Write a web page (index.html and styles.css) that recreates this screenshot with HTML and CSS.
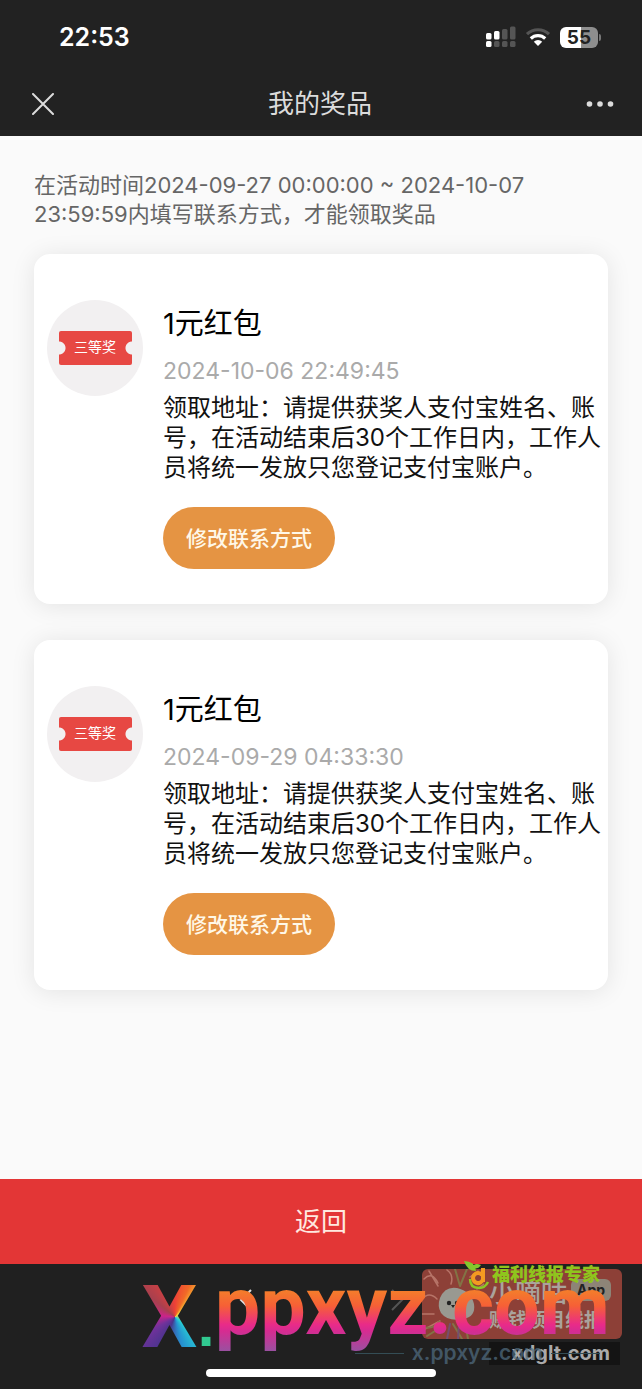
FILE: index.html
```html
<!DOCTYPE html>
<html lang="zh-CN">
<head>
<meta charset="utf-8">
<meta name="viewport" content="width=device-width, initial-scale=1">
<title>我的奖品</title>
<link rel="stylesheet" href="styles.css">
</head>
<body>
<div class="app">
  <header class="top">
    <div class="status">
      <span class="clock">22:53</span>
      <div class="indicators">
        <svg class="signal" width="30" height="22" viewBox="0 0 30 22" aria-hidden="true">
          <g fill="#fff"><rect x="0" y="7" width="5.500" height="6.500" rx="1.500"/><rect x="8" y="5" width="5.500" height="8.500" rx="1.500"/><rect x="0" y="15" width="5.500" height="6" rx="1.500"/></g>
          <g fill="#555"><rect x="16" y="3" width="5.500" height="10.500" rx="1.500"/><rect x="24" y="0.500" width="5.500" height="13" rx="1.500"/><rect x="8" y="15" width="5.500" height="6" rx="1.500"/><rect x="16" y="15" width="5.500" height="6" rx="1.500"/><rect x="24" y="15" width="5.500" height="6" rx="1.500"/></g>
        </svg>
        <svg class="wifi" width="26" height="20" viewBox="0 0 26 20" aria-hidden="true">
          <g fill="none" stroke-width="3.200"><path stroke="#555" d="M2 7.200a15.800 15.800 0 0 1 22 0"/><path stroke="#fff" d="M5.800 11.500a10.400 10.400 0 0 1 14.400 0"/></g>
          <path fill="#fff" d="M8.800 14.700a6 6 0 0 1 8.400 0L13 19z"/>
        </svg>
        <div class="battery"><span class="level">55</span><span class="cap"></span></div>
      </div>
    </div>
    <nav class="bar">
      <button class="icon-button" aria-label="关闭"><svg width="22" height="22" viewBox="0 0 22 22"><path d="M1 1l20 20M21 1L1 21" stroke="#dcdcdc" stroke-width="2" stroke-linecap="round"/></svg></button>
      <h1 class="title">我的奖品</h1>
      <button class="icon-button" aria-label="更多"><svg width="28" height="8" viewBox="0 0 28 8" fill="#dcdcdc"><circle cx="3.500" cy="4" r="2.800"/><circle cx="14" cy="4" r="2.800"/><circle cx="24.500" cy="4" r="2.800"/></svg></button>
    </nav>
  </header>

  <main class="content">
    <p class="notice">在活动时间2024-09-27 00:00:00 ~ 2024-10-07 23:59:59内填写联系方式，才能领取奖品</p>
    <article class="card">
      <div class="badge"><div class="ticket">三等奖</div></div>
      <div class="details">
        <h2 class="prize">1元红包</h2>
        <time class="date">2024-10-06 22:49:45</time>
        <p class="text">领取地址：请提供获奖人支付宝姓名、账号，在活动结束后30个工作日内，工作人员将统一发放只您登记支付宝账户。</p>
        <button class="edit">修改联系方式</button>
      </div>
    </article>
    <article class="card">
      <div class="badge"><div class="ticket">三等奖</div></div>
      <div class="details">
        <h2 class="prize">1元红包</h2>
        <time class="date">2024-09-29 04:33:30</time>
        <p class="text">领取地址：请提供获奖人支付宝姓名、账号，在活动结束后30个工作日内，工作人员将统一发放只您登记支付宝账户。</p>
        <button class="edit">修改联系方式</button>
      </div>
    </article>
  </main>

  <button class="back">返回</button>

  <footer class="bottom">
    <button class="history previous" aria-label="后退"><svg width="14" height="24" viewBox="0 0 14 24"><path d="M12 2L2 12l10 10" fill="none" stroke="#ddd" stroke-width="2"/></svg></button>
    <button class="history next" aria-label="前进"><svg width="14" height="24" viewBox="0 0 14 24"><path d="M2 2l10 10L2 22" fill="none" stroke="#555" stroke-width="2"/></svg></button>
    <div class="sticker">
      <svg class="mascot" width="62" height="70" viewBox="0 0 62 70" aria-hidden="true">
        <g fill="none" stroke-linecap="round">
          <path stroke="#b77468" stroke-width="1.500" d="M2 10q8-8 14 4M7 2l9 15M25 1q7 5 4 14M0 30q7-8 15 0M0 45h12M3 60l15-8M48 8l8-6M55 20l7-5"/>
          <path stroke="#827345" stroke-width="2" d="M33 0l5 17M45 0l-7 17M0 58q11 3 17-5M5 67l16-10M31 55l9 15M43 52l3 18"/>
          <path stroke="#744e70" stroke-width="2" d="M28 55l-3 15M37 55l-1 15"/>
        </g>
        <path fill="#999991" d="M18 29q5-12 17-10 14 3 17 16 2 13-11 15-15 3-22-6-4-7-1-15z"/>
        <g fill="#222"><circle cx="27" cy="34" r="2.200"/><circle cx="35" cy="34" r="2.200"/><path d="M29 36h4l-2 3z"/></g>
      </svg>
      <div class="sticker-copy">
        <div class="sticker-head"><span>小嘀咕</span><span class="app-tag">App</span></div>
        <div class="sticker-sub">赚钱项目线报</div>
      </div>
    </div>
    <div class="expert">
      <svg width="28" height="30" viewBox="0 0 28 30" aria-hidden="true">
        <path fill="#83c72d" d="M1 1q11 0 12 10Q4 11 1 1zM9 8q2-6 9-3-3 5-9 3z"/>
        <path fill="none" stroke="#8bc725" stroke-width="2.500" d="M7 19q0 9 9 9 6 0 9-6"/>
        <path fill="none" stroke="#f49a21" stroke-width="4" d="M20 8v14M20 19a5 5 0 1 1-1-4"/>
      </svg>
      <span>福利线报专家</span>
    </div>
    <div class="domain">xdglt.com</div>
    <div class="small-mark"><span class="rule"></span><span>x.ppxyz.com</span><span class="rule"></span></div>
    <div class="brand"><span class="brand-x">X</span><span class="brand-dot">.</span><span class="brand-name">ppxyz.com</span></div>
    <div class="home"></div>
  </footer>
</div>
</body>
</html>
```
FILE: styles.css
```css
* {
  box-sizing: border-box;
}

body {
  margin: 0;
  background: #fafafa;
  color: #111;
  font-family: Inter, "Noto Sans CJK SC", sans-serif;
}

button {
  border: 0;
  padding: 0;
  background: none;
  font: inherit;
}

h1,
h2,
p {
  margin: 0;
  font-weight: 400;
}

.app {
  display: flex;
  flex-direction: column;
  min-height: 100vh;
}

.top {
  background: #222;
  color: #dcdcdc;
}

.status {
  display: flex;
  align-items: center;
  justify-content: space-between;
  height: 72px;
  padding: 2px 41px 0 59px;
}

.clock {
  color: #fff;
  font-size: 25px;
  font-weight: 600;
}

.indicators {
  display: flex;
  align-items: center;
  gap: 9px;
}

.battery {
  display: flex;
  align-items: center;
  gap: 1px;
}

.level {
  width: 38px;
  height: 21px;
  border-radius: 6px;
  background: linear-gradient(90deg, #fff 55%, #8e8e8e 55%);
  color: #222;
  font-size: 19px;
  font-weight: 700;
  line-height: 21px;
  text-align: center;
}

.cap {
  width: 2px;
  height: 7px;
  border-radius: 0 2px 2px 0;
  background: #777;
}

.bar {
  display: flex;
  align-items: center;
  justify-content: space-between;
  height: 64px;
  padding: 0 28px 0 32px;
}

.icon-button {
  display: flex;
}

.title {
  font-size: 26px;
  line-height: 36px;
}

.content {
  display: flex;
  flex: 1;
  flex-direction: column;
  gap: 36px;
  padding: 35px 34px;
}

.notice {
  margin-bottom: -11px;
  color: #666;
  font-size: 22px;
  line-height: 29px;
}

.card {
  display: flex;
  gap: 20px;
  padding: 46px 0 35px 13px;
  border-radius: 16px;
  background: #fff;
  box-shadow: 0 2px 24px #00000018;
}

.badge {
  display: flex;
  flex: none;
  align-items: center;
  justify-content: center;
  width: 96px;
  height: 96px;
  border-radius: 50%;
  background: #f2f0f1;
}

.ticket {
  width: 73px;
  height: 34px;
  border-radius: 2px;
  background:
    radial-gradient(circle at 0 50%, #f2f0f1 6px, transparent 7px),
    radial-gradient(circle at 100% 50%, #f2f0f1 6px, transparent 7px),
    #e74843;
  color: #fff;
  font-size: 14px;
  line-height: 32px;
  text-align: center;
}

.details {
  min-width: 0;
  padding-top: 4px;
}

.prize {
  color: #000;
  font-size: 29px;
  line-height: 40px;
}

.date {
  display: block;
  margin: 12px 0 7px;
  color: #aaa;
  font-size: 23px;
  line-height: 30px;
}

.text {
  font-size: 24px;
  line-height: 30px;
}

.edit {
  display: block;
  height: 62px;
  margin-top: 24px;
  padding: 0 23px 2px;
  border-radius: 31px;
  background: #e59443;
  color: #fff8e8;
  font-size: 21px;
  font-weight: 500;
}

.back {
  height: 85px;
  padding-bottom: 5px;
  background: #e33636;
  color: #ffe9e0;
  font-size: 26px;
}

.bottom {
  position: relative;
  display: flex;
  justify-content: center;
  align-items: flex-end;
  height: 125px;
  padding-bottom: 12px;
  background: #202020;
}

.home {
  position: relative;
  width: 230px;
  height: 8px;
  border-radius: 4px;
  background: #fff;
}

.history {
  position: absolute;
  top: 24px;
}

.previous {
  left: 239px;
}

.next {
  right: 238px;
}

.sticker {
  position: absolute;
  top: 5px;
  right: 20px;
  display: flex;
  width: 200px;
  height: 70px;
  overflow: hidden;
  border-radius: 6px;
  background: #8d4037;
  color: #aaa39c;
}

.mascot {
  flex: none;
}

.sticker-copy {
  padding: 5px 0 0 5px;
  white-space: nowrap;
}

.sticker-head {
  display: flex;
  align-items: center;
  gap: 4px;
  height: 32px;
  font-size: 26px;
  font-weight: 500;
}

.app-tag {
  padding: 0 6px;
  border-radius: 6px;
  background: #8d8477;
  color: #222;
  font-size: 14px;
  font-weight: 700;
  line-height: 22px;
}

.sticker-sub {
  font-size: 19px;
  font-weight: 700;
  line-height: 30px;
}

.expert {
  position: absolute;
  top: -4px;
  right: 42px;
  display: flex;
  align-items: center;
  gap: 1px;
  color: #8fc51d;
  font-size: 18px;
  font-weight: 900;
  line-height: 26px;
}

.domain {
  position: absolute;
  top: 78px;
  right: 22px;
  padding: 0 10px 0 23px;
  background: #141414;
  color: #aaa;
  font-size: 20px;
  font-weight: 700;
  line-height: 23px;
}

.small-mark {
  position: absolute;
  top: 77px;
  right: 42px;
  display: flex;
  align-items: center;
  gap: 8px;
  color: #506c80bb;
  font-size: 21px;
  font-weight: 600;
  line-height: 24px;
}

.rule {
  width: 49px;
  height: 1px;
  background: #344d55;
}

.brand {
  position: absolute;
  top: 9px;
  right: 32px;
  display: flex;
  align-items: flex-start;
  font-family: Roboto, sans-serif;
  font-weight: 700;
}

.brand span {
  background-clip: text;
  color: transparent;
}

.brand-x {
  background-image: conic-gradient(from 0deg at 60% 50%, #ee4037 0deg, #f06a27 25deg, #f9cf38 45deg, #28d2d5 130deg, #2692d1 165deg, #49348d 205deg, #71329b 240deg, #cc238b 275deg, #a8404e 310deg, #ee4037 360deg);
  font-size: 88px;
  line-height: 88px;
}

.brand-dot {
  background-image: linear-gradient(#31c990, #31c990);
  font-family: "Liberation Sans", sans-serif;
  font-size: 62px;
  line-height: 104px;
}

.brand-name {
  padding-bottom: 10px;
  background-image: linear-gradient(#f47b2c 24%, #f66036 42%, #e92b88 66%, #d72b91 74%, #9a50a0 100%);
  font-size: 81px;
  line-height: 68px;
}
```
